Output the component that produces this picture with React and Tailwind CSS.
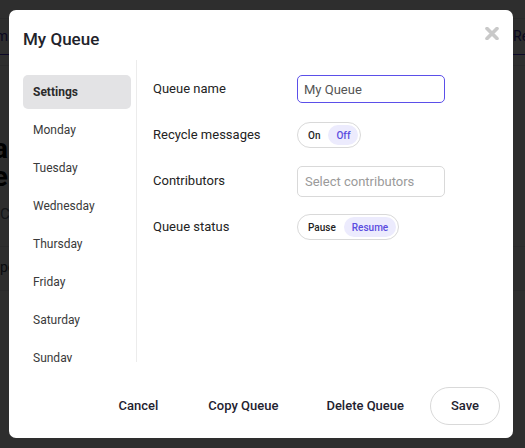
import { useState } from "react";

const days = ["Settings", "Monday", "Tuesday", "Wednesday", "Thursday", "Friday", "Saturday", "Sunday"];

function Segmented({ options, value, onChange }) {
  return (
    <div className="inline-flex h-[26px] items-center rounded-full border border-[#d9d9d9] p-[2px]">
      {options.map((opt) => (
        <button
          key={opt}
          onClick={() => onChange(opt)}
          className={
            value === opt
              ? "h-[20px] rounded-full bg-[#ecebfd] px-[8px] text-[10px] font-medium text-[#5b4de0]"
              : "h-[20px] rounded-full px-[8px] text-[10px] font-medium text-[#1f1f1f]"
          }
        >
          {opt}
        </button>
      ))}
    </div>
  );
}

function Row({ label, children }) {
  return (
    <div className="flex h-[46px] items-center">
      <div className="w-[144px] text-[13px] text-[#232323]">{label}</div>
      {children}
    </div>
  );
}

export default function App() {
  const [active, setActive] = useState("Settings");
  const [name, setName] = useState("My Queue");
  const [recycle, setRecycle] = useState("Off");
  const [status, setStatus] = useState("Resume");

  return (
    <div className="relative h-[448px] w-[525px] overflow-hidden bg-white font-['Roboto',sans-serif]">
      {/* page behind the dialog */}
      <div className="flex flex-col">
        <div className="h-[19px] border-b border-gray-200" />
        <div className="flex h-[36px] items-center border-b border-indigo-700 text-[14px] text-indigo-800">
          <span className="-ml-[52px] w-[60px] text-right">Forum</span>
          <span className="ml-auto -mr-[30px] w-[42px]">Review</span>
        </div>
        <div className="h-[11px] border-b border-gray-200" />
        <div className="-ml-[112px] mt-[69px] w-[120px] text-right text-[28px] font-bold leading-[28px] text-black">
          <div>Schema</div>
          <div>Queue</div>
        </div>
        <div className="mt-[12px] w-[9px] overflow-hidden whitespace-nowrap text-[15px] text-gray-500">Co</div>
        <div className="mt-[20px] h-[1px] bg-gray-200" />
        <div className="mt-[10px] w-[9px] overflow-hidden whitespace-nowrap text-[14px] text-gray-700">po</div>
        <div className="mt-[12px] h-[1px] bg-gray-200" />
      </div>

      {/* overlay + dialog */}
      <div className="absolute inset-0 bg-black/[0.82]">
        <div className="ml-[9px] mt-[10px] flex h-[428px] w-[504px] flex-col rounded-[7px] bg-white">
          <div className="flex h-[50px] items-start justify-between pl-[14px] pr-[13px]">
            <h2 className="mt-[17px] text-[17px] font-medium text-[#22232b]">My Queue</h2>
            <button className="mt-[16px] p-[1px]">
              <svg width="14" height="13" viewBox="0 0 14 13">
                <path d="M2 1.5 L12 11.5 M12 1.5 L2 11.5" stroke="#c9c9c9" strokeWidth="3.6" strokeLinecap="round" />
              </svg>
            </button>
          </div>

          <div className="flex h-[302px]">
            <div className="ml-[14px] flex w-[114px] flex-col gap-[4px] overflow-hidden border-r border-[#ececec] pr-[5px] pt-[15px]">
              {days.map((d) => (
                <button
                  key={d}
                  onClick={() => setActive(d)}
                  className={
                    active === d
                      ? "flex h-[34px] shrink-0 items-center rounded-[5px] bg-[#e3e3e5] pl-[10px] text-[12px] font-bold text-[#2b2b2b]"
                      : "flex h-[34px] shrink-0 items-center rounded-[5px] pl-[10px] text-[12px] text-[#3a3a3a]"
                  }
                >
                  {d}
                </button>
              ))}
            </div>

            <div className="flex flex-col pl-[16px] pt-[6px]">
              <Row label="Queue name">
                <input
                  value={name}
                  onChange={(e) => setName(e.target.value)}
                  className="h-[28px] w-[148px] rounded-[5px] border-[1.5px] border-[#5b4fe9] px-[6px] text-[13px] text-[#555] outline-none"
                />
              </Row>
              <Row label="Recycle messages">
                <Segmented options={["On", "Off"]} value={recycle} onChange={setRecycle} />
              </Row>
              <Row label="Contributors">
                <input
                  placeholder="Select contributors"
                  className="h-[31px] w-[148px] rounded-[5px] border border-[#d9d9d9] px-[7px] text-[13px] outline-none placeholder:text-[#9a9a9a]"
                />
              </Row>
              <Row label="Queue status">
                <Segmented options={["Pause", "Resume"]} value={status} onChange={setStatus} />
              </Row>
            </div>
          </div>

          <div className="flex flex-1 items-center justify-end gap-[2px] pr-[13px] pt-[12px] text-[13px] font-medium text-[#1f2230]">
            <button className="h-[38px] px-[24px]">Cancel</button>
            <button className="h-[38px] px-[24px]">Copy Queue</button>
            <button className="h-[38px] px-[22px]">Delete Queue</button>
            <button className="ml-[2px] h-[38px] w-[70px] rounded-full border border-[#d9d9d9]">Save</button>
          </div>
        </div>
      </div>
    </div>
  );
}
